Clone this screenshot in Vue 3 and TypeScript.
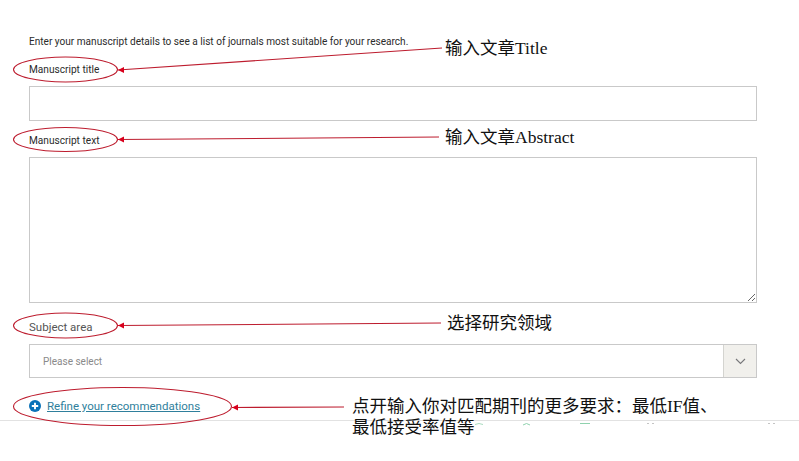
<template>
  <div class="page">
    <!-- Form -->
    <form class="finder-form" @submit.prevent>
      <p class="intro">Enter your manuscript details to see a list of journals most suitable for your research.</p>

      <label class="field-label" for="title">Manuscript title</label>
      <input id="title" v-model="title" class="text-input" type="text" />

      <label class="field-label" for="body">Manuscript text</label>
      <textarea id="body" v-model="body" class="text-area"></textarea>

      <label class="field-label subject">Subject area</label>
      <div class="select-box">
        <span class="select-value">Please select</span>
        <span class="select-btn">
          <svg width="11" height="7" viewBox="0 0 11 7" fill="none">
            <path d="M1 1 L5.5 5.5 L10 1" stroke="#77777a" stroke-width="1.1" />
          </svg>
        </span>
      </div>

      <a class="refine" href="#" @click.prevent>
        <svg width="12" height="12" viewBox="0 0 12 12">
          <circle cx="6" cy="6" r="6" fill="#0a72b8" />
          <path d="M6 2.8 V9.2 M2.8 6 H9.2" stroke="#fff" stroke-width="1.9" />
        </svg>
        <span>Refine your recommendations</span>
      </a>
    </form>

    <div class="divider"></div>

    <!-- Red annotations drawn over the form -->
    <svg class="marks" viewBox="0 0 799 461" fill="none" xmlns="http://www.w3.org/2000/svg">
      <ellipse v-for="e in ellipses" :key="e.cy" :cx="e.cx" :cy="e.cy" :rx="e.rx" :ry="e.ry" class="ring" />
      <g v-for="a in arrows" :key="a.y2">
        <line :x1="a.x1" :y1="a.y1" :x2="a.x2" :y2="a.y2" class="ring" />
        <path :d="`M${a.x2} ${a.y2} l6 -3 v6 Z`" fill="#d8001c" />
      </g>
      <!-- clipped tops of the row below the fold -->
      <path d="M475 424.5 q4 -2 8 0" stroke="#a9dcc0" />
      <path d="M523 425 q3.5 -3 7 0" stroke="#8fd2ae" />
      <path d="M580 423.5 h10" stroke="#8fd2ae" />
      <path d="M647 423.5 h2 m3 0 h2" stroke="#c4c4c4" />
      <path d="M768 423.5 h2 m3 0 h2" stroke="#c4c4c4" />
    </svg>

    <div class="note n1">输入文章Title</div>
    <div class="note n2">输入文章Abstract</div>
    <div class="note n3">选择研究领域</div>
    <div class="note n4">点开输入你对匹配期刊的更多要求：最低IF值、<br />最低接受率值等</div>
  </div>
</template>

<script setup lang="ts">
import { ref } from 'vue'

const title = ref('')
const body = ref('')

const ellipses = [
  { cx: 65.5, cy: 69.5, rx: 52, ry: 12.5 },
  { cx: 65.5, cy: 139.5, rx: 52, ry: 12 },
  { cx: 65.5, cy: 325.5, rx: 52, ry: 12.5 },
  { cx: 122.5, cy: 406.5, rx: 109, ry: 19 }
]

const arrows = [
  { x1: 442, y1: 48, x2: 118, y2: 70 },
  { x1: 439, y1: 137, x2: 118, y2: 139.5 },
  { x1: 441, y1: 323, x2: 118, y2: 325.5 },
  { x1: 344, y1: 407, x2: 232, y2: 407.5 }
]
</script>

<style>
html,
body {
  margin: 0;
  background: #fff;
}
</style>

<style scoped>
.page {
  position: relative;
  width: 799px;
  height: 461px;
  overflow: hidden;
  background: #fff;
  font-family: Roboto, "Liberation Sans", sans-serif;
  color: #333;
}

.finder-form {
  display: flex;
  flex-direction: column;
  align-items: flex-start;
  width: 728px;
  padding: 35px 0 0 29px;
}

.intro {
  margin: 0 0 14px;
  font-size: 10.08px;
  line-height: 14px;
  color: #2b2b2b;
}

.field-label {
  font-size: 10.15px;
  line-height: 14px;
  margin-bottom: 9px;
  color: #2b2b2b;
}

.field-label.subject {
  margin-bottom: 10px;
  font-size: 11.5px;
  color: #555;
}

.text-input,
.text-area,
.select-box {
  box-sizing: border-box;
  width: 728px;
  margin: 0 0 13px;
  border: 1px solid #c9c9c9;
  border-radius: 0;
  background: #fff;
  outline: none;
}

.text-input {
  height: 35px;
}

.text-area {
  display: block;
  height: 146px;
  margin-bottom: 17px;
  resize: vertical;
}

.select-box {
  display: flex;
  align-items: stretch;
  height: 34px;
  margin-bottom: 21px;
}

.select-value {
  flex: 1;
  padding-left: 13px;
  font-size: 10px;
  line-height: 33px;
  color: #8a8a8a;
}

.select-btn {
  display: flex;
  align-items: center;
  justify-content: center;
  width: 32px;
  background: #f1f0ec;
  border-left: 1px solid #d4d4d0;
}

.refine {
  display: flex;
  align-items: center;
  gap: 6px;
  font-size: 11.5px;
  line-height: 14px;
  color: #2f7f9c;
}

.refine svg {
  flex: none;
}

.refine span {
  text-decoration: underline;
}

.divider {
  position: absolute;
  left: 0;
  right: 0;
  top: 420px;
  height: 1px;
  background: #e2e2e2;
}

.marks {
  position: absolute;
  inset: 0;
  width: 799px;
  height: 461px;
  pointer-events: none;
}

.ring {
  stroke: #bd1c2e;
  stroke-width: 1.1;
}

.note {
  position: absolute;
  font-family: "Liberation Serif", "Noto Sans CJK SC", serif;
  font-size: 17.5px;
  line-height: 21px;
  color: #111;
  white-space: nowrap;
}

.n1 {
  left: 445px;
  top: 38px;
}

.n2 {
  left: 445px;
  top: 127px;
}

.n3 {
  left: 447px;
  top: 313px;
}

.n4 {
  left: 352px;
  top: 396px;
}
</style>
